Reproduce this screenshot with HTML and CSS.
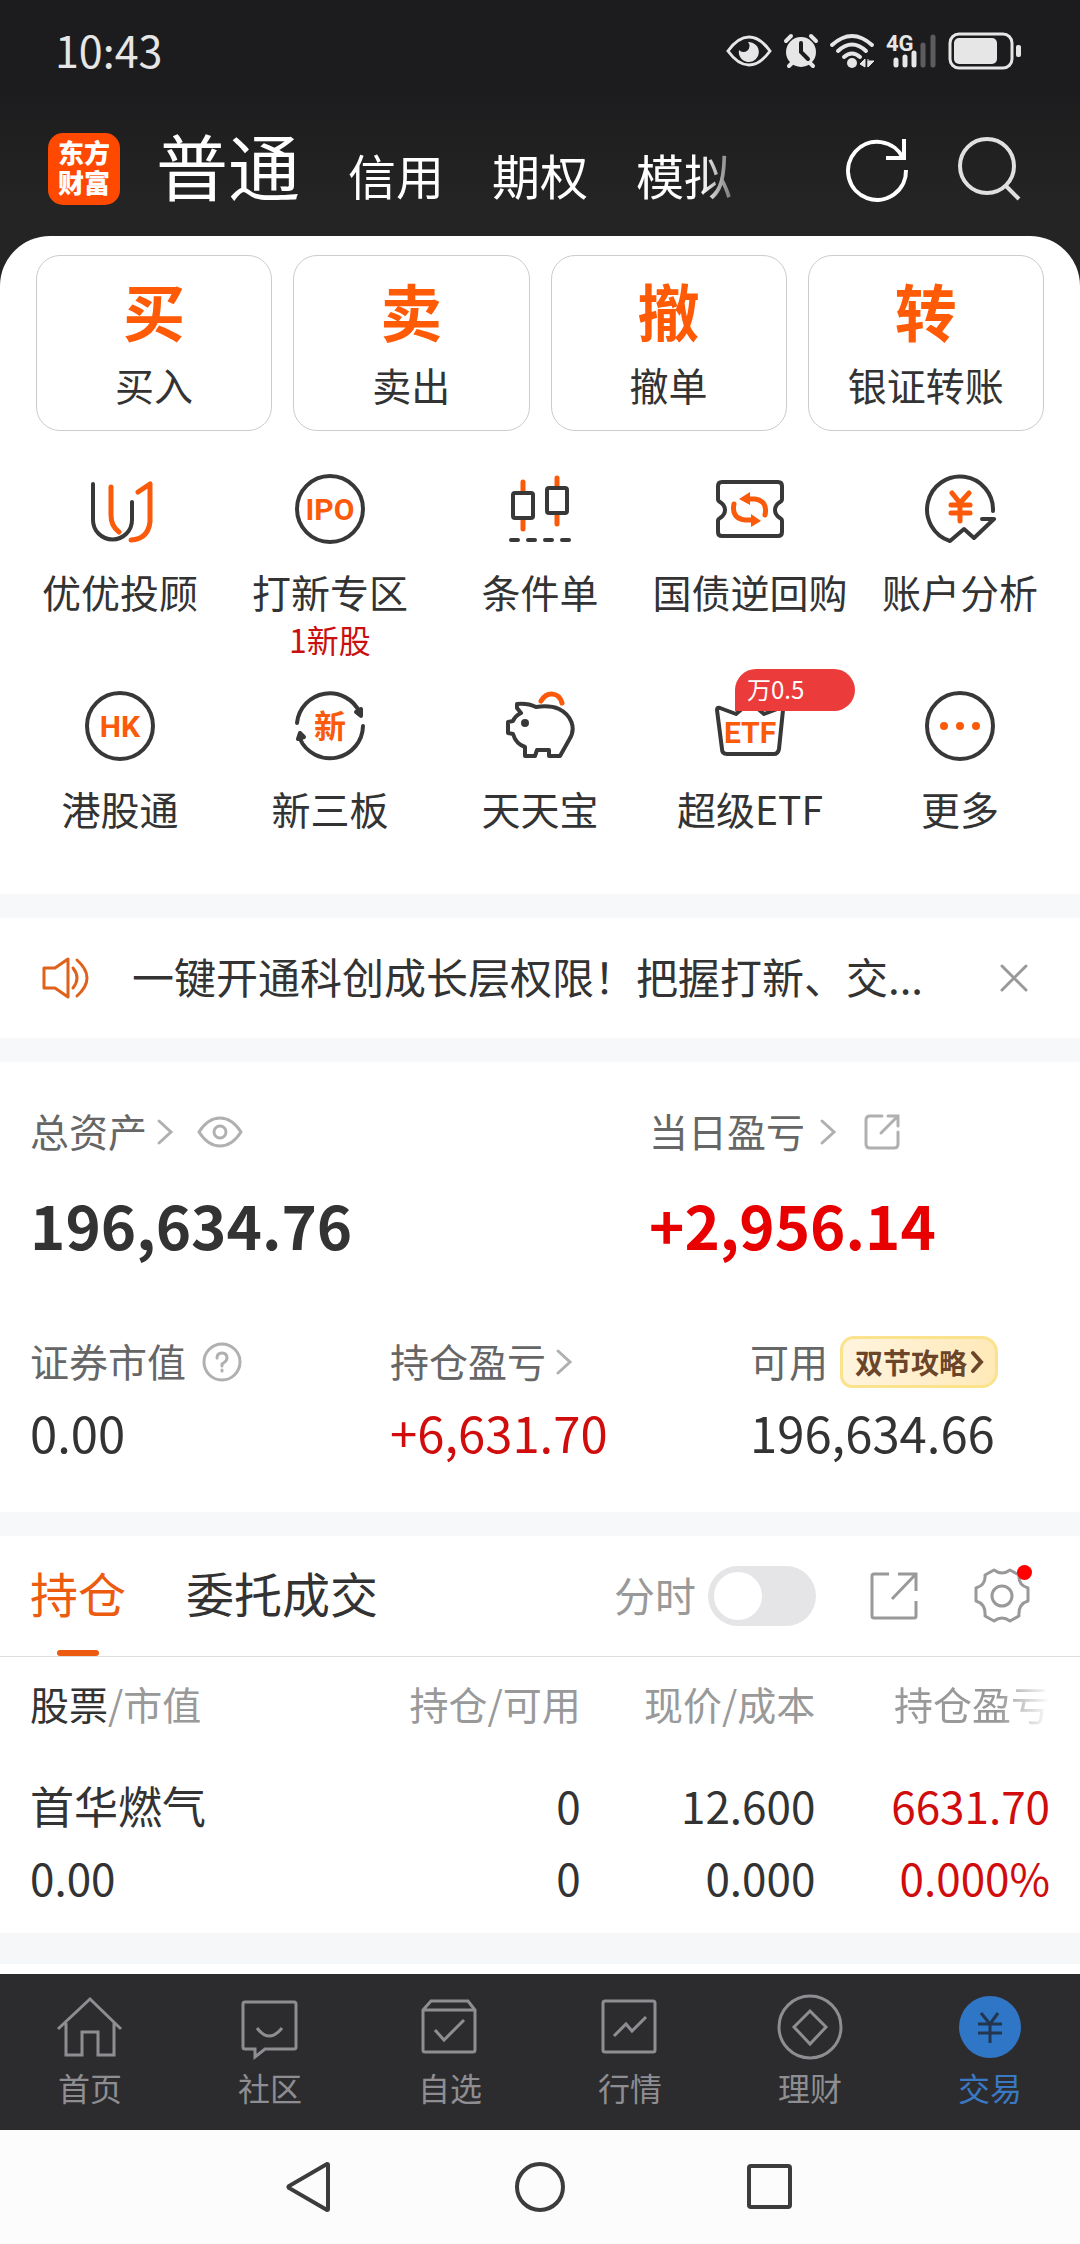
FILE: index.html
```html
<!DOCTYPE html>
<html lang="zh-CN">
<head>
    <meta charset="UTF-8">
    <meta name="viewport" content="width=device-width, initial-scale=1.0">
    <title>东方财富 - 交易</title>
    <link rel="stylesheet" href="styles.css">
</head>
<body>

    <header class="top">
        <div class="status-bar">
            <span class="time">10:43</span>
            <div class="status-icons">
                <svg width="46" height="36" viewBox="0 0 46 36">
                    <path d="M2 18Q12 4 23 4T44 18Q34 32 23 32T2 18Z" fill="none" stroke="#e6e6e6" stroke-width="3"/>
                    <path d="M22 9A10 10 0 1 1 13 17A6 6 0 0 0 22 9Z" fill="#e6e6e6"/>
                </svg>
                <svg width="34" height="36" viewBox="0 0 34 36">
                    <circle cx="17" cy="19" r="15" fill="#e6e6e6"/>
                    <path d="M2 8L7 3M32 8L27 3M5 33L9 29M29 33L25 29" stroke="#e6e6e6" stroke-width="4" stroke-linecap="round"/>
                    <path d="M17 10V19L24 26" fill="none" stroke="#1c1c1e" stroke-width="4" stroke-linecap="round"/>
                </svg>
                <svg width="44" height="36" viewBox="0 0 44 36">
                    <g fill="none" stroke="#e6e6e6" stroke-width="4" stroke-linecap="round">
                        <path d="M2 12Q22 -6 42 12"/>
                        <path d="M8 18Q22 5 36 18"/>
                        <path d="M14 24Q22 17 30 24"/>
                    </g>
                    <circle cx="22" cy="30" r="5" fill="#e6e6e6"/>
                    <path d="M30 31L35 26V34ZM38 34V26M38 34L44 28H38Z" fill="#e6e6e6" stroke="#e6e6e6"/>
                </svg>
                <svg width="50" height="36" viewBox="0 0 50 36">
                    <text x="0" y="18" class="net-type">4G</text>
                    <path d="M10 27V32M19 24V32M28 20V32" stroke="#e6e6e6" stroke-width="5" stroke-linecap="round"/>
                    <path d="M37 12V32M47 4V32" stroke="#5c5c5e" stroke-width="5" stroke-linecap="round"/>
                </svg>
                <svg width="73" height="38" viewBox="0 0 73 38">
                    <rect x="2" y="2" width="62" height="34" rx="9" fill="none" stroke="#e6e6e6" stroke-width="3"/>
                    <rect x="6" y="6" width="43" height="26" rx="5" fill="#e6e6e6"/>
                    <rect x="68" y="13" width="5" height="12" rx="2" fill="#e6e6e6"/>
                </svg>
            </div>
        </div>

        <div class="title-bar">
            <div class="logo">东方<br>财富</div>
            <nav class="accounts">
                <a href="#" class="current">普通</a>
                <a href="#">信用</a>
                <a href="#">期权</a>
                <a href="#">模拟</a>
            </nav>
            <button class="icon-btn" aria-label="刷新">
                <svg width="64" height="66" viewBox="0 0 64 66" fill="none" stroke="#fff" stroke-width="4">
                    <path d="M61 34A29 29 0 1 1 58 22"/>
                    <path d="M59 3V22H41"/>
                </svg>
            </button>
            <button class="icon-btn" aria-label="搜索">
                <svg width="64" height="66" viewBox="0 0 64 66" fill="none" stroke="#e0e0e0" stroke-width="4">
                    <circle cx="29" cy="30" r="27"/>
                    <path d="M47 49L61 63"/>
                </svg>
            </button>
        </div>
    </header>

    <main>
        <section class="panel">
            <div class="actions">
                <button class="action"><b>买</b>买入</button>
                <button class="action"><b>卖</b>卖出</button>
                <button class="action"><b>撤</b>撤单</button>
                <button class="action"><b>转</b>银证转账</button>
            </div>

            <div class="shortcuts">
                <a href="#" class="shortcut">
                    <svg class="icon" viewBox="0 0 72 72">
                        <path d="M9 11V47A19 19 0 0 0 48 47V29"/>
                        <path class="hot" d="M27 14V42Q27 53 35 59M54 19L66 11V49Q64 66 47 67"/>
                    </svg>
                    优优投顾
                </a>
                <a href="#" class="shortcut">
                    <svg class="icon" viewBox="0 0 72 72">
                        <circle cx="36" cy="36" r="33"/>
                        <text x="36" y="47">IPO</text>
                    </svg>
                    打新专区
                    <small>1新股</small>
                </a>
                <a href="#" class="shortcut">
                    <svg class="icon" viewBox="0 0 72 72">
                        <path class="hot" d="M19 9V18M19 47V56M53 5V13M53 42V51"/>
                        <rect x="9" y="20" width="20" height="25" rx="2"/>
                        <rect x="43" y="15" width="20" height="25" rx="2"/>
                        <path d="M7 67H14M24 67H31M41 67H48M58 67H65"/>
                    </svg>
                    条件单
                </a>
                <a href="#" class="shortcut">
                    <svg class="icon" viewBox="0 0 72 72">
                        <path d="M8 9H64Q68 9 68 13V26Q68 28 66 29Q61 32 61 37T66 45Q68 46 68 48V59Q68 63 64 63H8Q4 63 4 59V48Q4 46 6 45Q11 42 11 37T6 29Q4 28 4 26V13Q4 9 8 9Z"/>
                        <path class="hot" d="M32 26H41Q54 28 51 42M40 47H31Q17 45 20 31"/>
                        <path class="hot-fill" d="M25 26L36 19V32ZM47 48L37 41V54Z"/>
                    </svg>
                    国债逆回购
                </a>
                <a href="#" class="shortcut">
                    <svg class="icon" viewBox="0 0 72 72">
                        <path d="M69 38A33 33 0 1 0 26 68L40 56L50 65L70 46H58"/>
                        <path class="hot" d="M28 20L36 30L45 20M36 30V48M27 32H46M27 40H46"/>
                    </svg>
                    账户分析
                </a>
                <a href="#" class="shortcut">
                    <svg class="icon" viewBox="0 0 72 72">
                        <circle cx="36" cy="36" r="33"/>
                        <text x="36" y="47">HK</text>
                    </svg>
                    港股通
                </a>
                <a href="#" class="shortcut">
                    <svg class="icon" viewBox="0 0 72 72">
                        <path d="M3 33A33 33 0 0 1 66 23M69 36A33 33 0 0 1 6 49"/>
                        <path class="dark-fill" d="M62 22L67 19L67 26ZM4 49L6 43L10 47Z"/>
                        <text class="cjk" x="36" y="48">新</text>
                    </svg>
                    新三板
                </a>
                <a href="#" class="shortcut">
                    <svg class="icon" viewBox="0 0 72 72">
                        <path d="M17 23L13 18V14Q24 13 32 17Q46 15 55 19C67 25 73 38 65 50L56 66H45V60H33L31 66H21V57Q12 54 9 44L4 43V32L9 31Q11 26 17 23Z"/>
                        <circle class="dark-fill" cx="21" cy="33" r="2"/>
                        <path class="hot" d="M37 11C43 1 55 2 58 13"/>
                    </svg>
                    天天宝
                </a>
                <a href="#" class="shortcut">
                    <svg class="icon" viewBox="0 0 72 72">
                        <path d="M3 20Q3 17 6 18L22 24L36 12L50 24L66 18Q69 17 69 20L65 59Q64 64 60 64H13Q8 64 8 59Z"/>
                        <text x="36" y="53">ETF</text>
                    </svg>
                    超级ETF
                    <span class="badge">万0.5</span>
                </a>
                <a href="#" class="shortcut">
                    <svg class="icon" viewBox="0 0 72 72">
                        <circle cx="36" cy="36" r="33"/>
                        <path class="dots" d="M20 36H20M36 36H36M52 36H52"/>
                    </svg>
                    更多
                </a>
            </div>
        </section>

        <section class="notice">
            <svg width="48" height="44" viewBox="0 0 48 44" fill="none" stroke="#e0611c" stroke-width="3" stroke-linejoin="round" stroke-linecap="round">
                <path d="M2 12H13L26 3V41L13 32H2Z"/>
                <path d="M31 12Q39 22 31 32M35 4Q55 22 35 40"/>
            </svg>
            <p>一键开通科创成长层权限！把握打新、交...</p>
            <button class="icon-btn" aria-label="关闭">
                <svg width="28" height="28" viewBox="0 0 28 28" stroke="#999" stroke-width="3" stroke-linecap="round">
                    <path d="M2 2L26 26M26 2L2 26"/>
                </svg>
            </button>
        </section>

        <section class="assets">
            <div class="totals">
                <div class="total">
                    <div class="label">
                        <a href="#">总资产</a>
                        <svg class="arrow" viewBox="0 0 16 26"><path d="M2 2L14 13L2 24"/></svg>
                        <svg class="eye" width="46" height="34" viewBox="0 0 46 34">
                            <path d="M2 17Q11 3 23 3T44 17Q35 31 23 31T2 17Z"/>
                            <circle cx="23" cy="17" r="6"/>
                        </svg>
                    </div>
                    <div class="amount">196,634.76</div>
                </div>
                <div class="total">
                    <div class="label">
                        <a href="#">当日盈亏</a>
                        <svg class="arrow spaced" viewBox="0 0 16 26"><path d="M2 2L14 13L2 24"/></svg>
                        <svg class="share" width="36" height="36" viewBox="0 0 36 36">
                            <path d="M18 2H6Q2 2 2 6V30Q2 34 6 34H30Q34 34 34 30V18M24 2H34V12M34 2L17 19"/>
                        </svg>
                    </div>
                    <div class="amount up">+2,956.14</div>
                </div>
            </div>
            <div class="details">
                <div class="detail">
                    <div class="label">
                        <span>证券市值</span>
                        <svg class="help" width="40" height="40" viewBox="0 0 40 40">
                            <circle cx="20" cy="20" r="18"/>
                            <path d="M15 16Q15 11 20 11T25 16Q25 19 20 22V24M20 28V29"/>
                        </svg>
                    </div>
                    <div class="value">0.00</div>
                </div>
                <div class="detail">
                    <div class="label">
                        <a href="#">持仓盈亏</a>
                        <svg class="arrow" viewBox="0 0 16 26"><path d="M2 2L14 13L2 24"/></svg>
                    </div>
                    <div class="value up">+6,631.70</div>
                </div>
                <div class="detail">
                    <div class="label">
                        <span>可用</span>
                        <button class="promo">双节攻略<svg width="12" height="22" viewBox="0 0 12 22"><path d="M2 2L10 11L2 20"/></svg></button>
                    </div>
                    <div class="value">196,634.66</div>
                </div>
            </div>
        </section>

        <section class="holdings">
            <div class="tabs">
                <a href="#" class="tab active">持仓</a>
                <a href="#" class="tab">委托成交</a>
                <div class="tools">
                    <label for="minuteSwitch">分时</label>
                    <input type="checkbox" id="minuteSwitch" class="switch">
                    <button class="icon-btn" aria-label="分享">
                        <svg width="48" height="48" viewBox="0 0 48 48" fill="none" stroke="#999" stroke-width="3">
                            <path d="M19 2H4Q2 2 2 4V44Q2 46 4 46H44Q46 46 46 44V29M28 2H46V19M45 3L22 27"/>
                        </svg>
                    </button>
                    <button class="icon-btn settings" aria-label="设置">
                        <svg width="56" height="56" viewBox="0 0 56 56" fill="none" stroke="#999" stroke-width="3">
                            <path d="M20 2Q28 8 36 2L45 7Q44 17 54 20V33Q44 36 45 48L36 53Q28 47 20 53L11 48Q12 36 2 33V20Q12 17 11 7Z" stroke-linejoin="round"/>
                            <circle cx="28" cy="28" r="10"/>
                        </svg>
                    </button>
                </div>
            </div>

            <table class="stocks">
                <thead>
                    <tr>
                        <th><span class="strong">股票</span>/市值</th>
                        <th>持仓/可用</th>
                        <th>现价/成本</th>
                        <th class="fade">持仓盈亏</th>
                    </tr>
                </thead>
                <tbody>
                    <tr>
                        <td>首华燃气<br>0.00</td>
                        <td>0<br>0</td>
                        <td>12.600<br>0.000</td>
                        <td class="up">6631.70<br>0.000%</td>
                    </tr>
                </tbody>
            </table>
        </section>
    </main>

    <nav class="tab-bar">
        <a href="#">
            <svg viewBox="0 0 66 66"><path d="M1 35L33 5L64 35M9 29V61H25V38H41V61H57V29"/></svg>
            首页
        </a>
        <a href="#">
            <svg viewBox="0 0 66 66"><path d="M8 8H57Q59 8 59 10V53Q59 55 57 55H28L18 63V55H8Q6 55 6 53V10Q6 8 8 8ZM20 34Q32 50 45 34"/></svg>
            社区
        </a>
        <a href="#">
            <svg viewBox="0 0 66 66"><path d="M6 16L14 7H51L58 16V56Q58 58 56 58H8Q6 58 6 56ZM6 16H58M18 36L27 46L47 26"/></svg>
            自选
        </a>
        <a href="#">
            <svg viewBox="0 0 66 66"><rect x="6" y="7" width="52" height="51" rx="2"/><path d="M17 42L29 30L35 37L49 23"/></svg>
            行情
        </a>
        <a href="#">
            <svg viewBox="0 0 66 66"><circle cx="33" cy="33" r="31"/><path d="M33 17L49 33L33 50L17 33Z"/></svg>
            理财
        </a>
        <a href="#" class="active">
            <svg viewBox="0 0 66 66"><circle cx="33" cy="33" r="31"/><path d="M24 19L33 30L41 19M33 30V49M21 30H45M21 39H45"/></svg>
            交易
        </a>
    </nav>

    <footer class="system-nav">
        <button class="icon-btn" aria-label="返回">
            <svg width="54" height="54" viewBox="0 0 54 54"><path d="M45 5V49Q45 50 44 50L6 28Q5 27 6 26L44 4Q45 4 45 5Z"/></svg>
        </button>
        <button class="icon-btn" aria-label="主屏幕">
            <svg width="54" height="54" viewBox="0 0 54 54"><circle cx="27" cy="27" r="23"/></svg>
        </button>
        <button class="icon-btn" aria-label="最近任务">
            <svg width="54" height="54" viewBox="0 0 54 54"><rect x="6" y="6" width="41" height="41" rx="2"/></svg>
        </button>
    </footer>

</body>
</html>
```

FILE: styles.css
```css
* {
    box-sizing: border-box;
}

body {
    margin: 0;
    min-height: 100vh;
    display: flex;
    flex-direction: column;
    font-family: "Noto Sans CJK SC", sans-serif;
    font-size: 39px;
    color: #333;
    background-color: #fff;
}

a {
    color: inherit;
    text-decoration: none;
}

button {
    font-family: inherit;
    color: inherit;
    padding: 0;
    border: none;
    background: none;
    cursor: pointer;
}

svg {
    display: block;
    flex: none;
    overflow: visible;
}

p {
    margin: 0;
}

main {
    flex: 1;
}

.up {
    color: #d00c0c;
}

/* Header */
.top {
    background: linear-gradient(#1c1c1e 30%, #242424 70%);
    color: #fff;
    padding-bottom: 50px;
}

.status-bar {
    display: flex;
    align-items: center;
    justify-content: space-between;
    height: 102px;
    padding: 0 59px 0 55px;
}

.time {
    padding-bottom: 4px;
    font-size: 43px;
    color: #e6e6e6;
}

.status-icons {
    display: flex;
    align-items: center;
    gap: 12px;
}

.net-type {
    font-family: Roboto, sans-serif;
    font-size: 22px;
    font-weight: bold;
    fill: #e6e6e6;
}

.title-bar {
    display: flex;
    align-items: center;
    height: 134px;
    padding: 0 58px 0 48px;
}

.logo {
    width: 72px;
    height: 72px;
    padding-top: 4px;
    border-radius: 15px;
    background-color: #ff4800;
    font-size: 26px;
    font-weight: 900;
    line-height: 30px;
    text-align: center;
}

.accounts {
    flex: 1;
    display: flex;
    align-items: baseline;
    gap: 48px;
    margin: 0 94px 0 36px;
    overflow: hidden;
    white-space: nowrap;
    font-size: 48px;
    line-height: 110px;
    mask-image: linear-gradient(to right, #000 calc(100% - 50px), transparent);
}

.accounts .current {
    font-size: 72px;
}

.icon-btn + .icon-btn {
    margin-left: 49px;
}

/* White panel */
.panel {
    margin-top: -50px;
    padding: 19px 0 18px;
    border-radius: 50px 50px 0 0;
    background-color: #fff;
}

.actions {
    display: grid;
    grid-template-columns: repeat(4, 1fr);
    gap: 21px;
    padding: 0 36px;
}

.action {
    display: flex;
    flex-direction: column;
    align-items: center;
    padding: 20px 0 16px;
    border: 1px solid #ccc;
    border-radius: 24px;
    font-size: 39px;
    line-height: 60px;
}

.action b {
    font-size: 62px;
    line-height: 68px;
    margin-bottom: 10px;
    color: #ff5a05;
}

.shortcuts {
    display: grid;
    grid-template-columns: repeat(5, 1fr);
    row-gap: 2px;
    padding: 42px 15px 0;
}

.shortcut {
    position: relative;
    display: flex;
    flex-direction: column;
    align-items: center;
    min-height: 186px;
    line-height: 56px;
    white-space: nowrap;
}

.shortcut small {
    font-size: 32px;
    line-height: 40px;
    padding-bottom: 29px;
    color: #c90f0f;
}

.icon {
    width: 72px;
    height: 72px;
    margin-bottom: 18px;
    fill: none;
    stroke: #383838;
    stroke-width: 4;
    stroke-linecap: round;
    stroke-linejoin: round;
}

.icon text {
    font-family: Roboto, "Noto Sans CJK SC", sans-serif;
    font-size: 30px;
    font-weight: bold;
    text-anchor: middle;
    fill: #fa5a0a;
    stroke: none;
}

.icon .cjk {
    font-size: 32px;
}

.icon .hot {
    stroke: #fa5a0a;
    stroke-width: 5;
}

.icon .hot-fill {
    fill: #fa5a0a;
    stroke: none;
}

.icon .dark-fill {
    fill: #383838;
}

.icon .dots {
    stroke: #fa5a0a;
    stroke-width: 8;
}

.badge {
    position: absolute;
    top: -21px;
    left: 50%;
    width: 120px;
    height: 42px;
    margin-left: -15px;
    padding-left: 12px;
    border-radius: 21px 21px 21px 0;
    background-color: #eb3b3b;
    color: #fff;
    font-size: 24px;
    line-height: 40px;
}

/* Notice */
.notice {
    display: flex;
    align-items: center;
    height: 168px;
    padding: 0 52px 0 42px;
    border: solid #f7f8fa;
    border-width: 24px 0;
}

.notice p {
    flex: 1;
    margin-left: 42px;
    padding-bottom: 4px;
    overflow: hidden;
    white-space: nowrap;
    font-size: 42px;
    line-height: 64px;
}

/* Assets */
.assets {
    padding: 40px 0;
    border-bottom: 24px solid #f7f8fa;
}

.totals {
    display: grid;
    grid-template-columns: 619fr 461fr;
}

.details {
    display: grid;
    grid-template-columns: repeat(3, 1fr);
    margin-top: 60px;
}

.total,
.detail {
    padding-left: 30px;
}

.label {
    display: flex;
    align-items: center;
    height: 60px;
    color: #666;
}

.label a,
.label span {
    padding-bottom: 4px;
}

.label svg {
    fill: none;
    stroke: #b0b0b0;
    stroke-width: 3;
    stroke-linecap: round;
}

.label .arrow {
    width: 16px;
    height: 26px;
    margin-left: 10px;
}

.label .spaced {
    margin-left: 15px;
}

.eye {
    margin-left: 24px;
}

.share {
    margin-left: 28px;
}

.help {
    margin-left: 16px;
}

.amount {
    margin-top: 14px;
    font-size: 60px;
    font-weight: bold;
    line-height: 96px;
}

.amount.up {
    color: #e80000;
}

.value {
    font-size: 49px;
    line-height: 80px;
}

.promo {
    display: flex;
    align-items: center;
    gap: 4px;
    height: 52px;
    margin-left: 12px;
    padding: 0 12px;
    border: 3px solid #fbe38d;
    border-radius: 14px 16px 16px 12px;
    background: linear-gradient(to right, #fff4df, #ffe9b8);
    color: #6b452a;
    font-size: 28px;
    font-weight: bold;
}

.promo svg {
    stroke: #6b452a;
    stroke-width: 4;
}

/* Holdings */
.tabs {
    display: flex;
    align-items: center;
    gap: 60px;
    height: 121px;
    padding: 0 50px 0 30px;
    border-bottom: 1px solid #ddd;
}

.tab {
    position: relative;
    padding-bottom: 8px;
    font-size: 48px;
    line-height: 112px;
}

.tab.active {
    color: #ec5b10;
}

.tab.active::after {
    content: "";
    position: absolute;
    bottom: 0;
    left: 50%;
    width: 42px;
    height: 6px;
    margin-left: -21px;
    border-radius: 3px;
    background-color: #ec5b10;
}

.tools {
    flex: 1;
    display: flex;
    align-items: center;
    justify-content: flex-end;
    color: #999;
    font-size: 41px;
}

.tools label {
    padding-bottom: 4px;
}

.switch {
    appearance: none;
    width: 108px;
    height: 60px;
    margin: 0 54px 0 12px;
    padding: 6px;
    border-radius: 30px;
    background-color: #e5e5e7;
}

.switch::before {
    content: "";
    display: block;
    width: 48px;
    height: 48px;
    border-radius: 50%;
    background-color: #fff;
}

.switch:checked::before {
    margin-left: 48px;
}

.tools .settings {
    position: relative;
    margin-left: 56px;
}

.settings::after {
    content: "";
    position: absolute;
    top: -3px;
    right: -2px;
    width: 15px;
    height: 15px;
    border-radius: 50%;
    background-color: #f00;
}

.stocks {
    width: 100%;
    table-layout: fixed;
    border-spacing: 0;
    padding: 0 30px;
    border-bottom: 31px solid #f6f7f9;
}

.stocks th,
.stocks td {
    width: 23%;
    padding: 0;
    text-align: right;
    white-space: nowrap;
}

.stocks th:first-child,
.stocks td:first-child {
    width: 31%;
    text-align: left;
}

.stocks th {
    height: 96px;
    padding-bottom: 4px;
    font-weight: normal;
    color: #999;
}

.stocks .strong {
    color: #333;
}

.stocks .fade {
    mask-image: linear-gradient(to right, #000 78%, transparent);
}

.stocks td {
    padding: 16px 0 20px;
    font-size: 44px;
    line-height: 72px;
}

/* Bottom bars */
.tab-bar {
    display: flex;
    height: 156px;
    padding-top: 20px;
    background-color: #2c2c2e;
    color: #8e8e92;
    font-size: 32px;
    line-height: 40px;
}

.tab-bar a {
    flex: 1;
    display: flex;
    flex-direction: column;
    align-items: center;
    gap: 7px;
}

.tab-bar svg {
    width: 66px;
    height: 66px;
    fill: none;
    stroke: #8e8e92;
    stroke-width: 3;
}

.tab-bar .active {
    color: #3a78c4;
}

.tab-bar .active circle {
    fill: #3076c6;
    stroke: none;
}

.tab-bar .active path {
    stroke: #23364f;
}

.system-nav {
    display: flex;
    align-items: center;
    justify-content: center;
    gap: 176px;
    height: 114px;
    background-color: #fcfcfc;
}

.system-nav .icon-btn {
    margin: 0;
}

.system-nav svg {
    fill: none;
    stroke: #3c3c3c;
    stroke-width: 4;
}
```
